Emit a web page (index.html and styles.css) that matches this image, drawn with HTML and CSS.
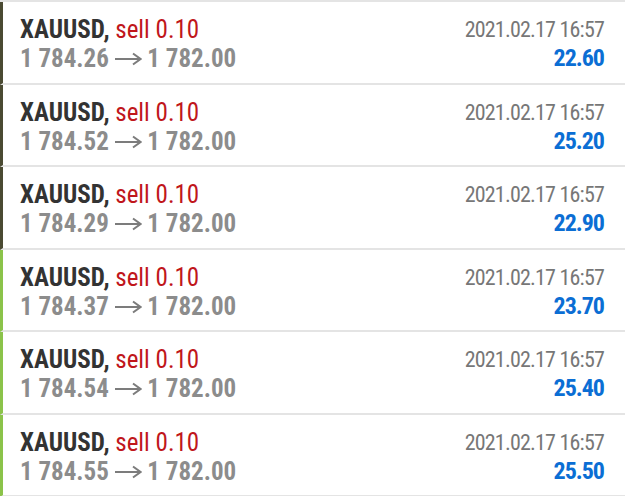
FILE: index.html
```html
<!DOCTYPE html>
<html lang="en">
<head>
    <meta charset="UTF-8">
    <meta name="viewport" content="width=device-width, initial-scale=1.0">
    <title>History</title>
    <link rel="stylesheet" href="styles.css">
</head>
<body>
    <div class="deal-list">
        <div class="deal dark">
            <div class="left">
                <div class="title"><b>XAUUSD,</b> <span class="sell">sell 0.10</span></div>
                <div class="prices">1 784.26 <svg class="arrow" viewBox="0 0 27 14"><path d="M0 7H25M18 1.5L25.5 7L18 12.5"/></svg> 1 782.00</div>
            </div>
            <div class="right">
                <div class="time">2021.02.17 16:57</div>
                <div class="profit">22.60</div>
            </div>
        </div>
        <div class="deal dark">
            <div class="left">
                <div class="title"><b>XAUUSD,</b> <span class="sell">sell 0.10</span></div>
                <div class="prices">1 784.52 <svg class="arrow" viewBox="0 0 27 14"><path d="M0 7H25M18 1.5L25.5 7L18 12.5"/></svg> 1 782.00</div>
            </div>
            <div class="right">
                <div class="time">2021.02.17 16:57</div>
                <div class="profit">25.20</div>
            </div>
        </div>
        <div class="deal dark">
            <div class="left">
                <div class="title"><b>XAUUSD,</b> <span class="sell">sell 0.10</span></div>
                <div class="prices">1 784.29 <svg class="arrow" viewBox="0 0 27 14"><path d="M0 7H25M18 1.5L25.5 7L18 12.5"/></svg> 1 782.00</div>
            </div>
            <div class="right">
                <div class="time">2021.02.17 16:57</div>
                <div class="profit">22.90</div>
            </div>
        </div>
        <div class="deal green">
            <div class="left">
                <div class="title"><b>XAUUSD,</b> <span class="sell">sell 0.10</span></div>
                <div class="prices">1 784.37 <svg class="arrow" viewBox="0 0 27 14"><path d="M0 7H25M18 1.5L25.5 7L18 12.5"/></svg> 1 782.00</div>
            </div>
            <div class="right">
                <div class="time">2021.02.17 16:57</div>
                <div class="profit">23.70</div>
            </div>
        </div>
        <div class="deal green">
            <div class="left">
                <div class="title"><b>XAUUSD,</b> <span class="sell">sell 0.10</span></div>
                <div class="prices">1 784.54 <svg class="arrow" viewBox="0 0 27 14"><path d="M0 7H25M18 1.5L25.5 7L18 12.5"/></svg> 1 782.00</div>
            </div>
            <div class="right">
                <div class="time">2021.02.17 16:57</div>
                <div class="profit">25.40</div>
            </div>
        </div>
        <div class="deal green">
            <div class="left">
                <div class="title"><b>XAUUSD,</b> <span class="sell">sell 0.10</span></div>
                <div class="prices">1 784.55 <svg class="arrow" viewBox="0 0 27 14"><path d="M0 7H25M18 1.5L25.5 7L18 12.5"/></svg> 1 782.00</div>
            </div>
            <div class="right">
                <div class="time">2021.02.17 16:57</div>
                <div class="profit">25.50</div>
            </div>
        </div>
    </div>
</body>
</html>
```

FILE: styles.css
```css
body {
    margin: 0;
    padding: 0;
    background-color: #ffffff;
    font-family: 'Roboto', 'Liberation Sans', sans-serif;
    font-stretch: condensed;
    overflow: hidden;
}
.deal-list {
    border-top: 2px solid #e4e4e4;
}
.deal {
    display: flex;
    justify-content: space-between;
    height: 80.5px;
    border-bottom: 2px solid #e4e4e4;
    border-left: 3px solid #4a4a32;
    padding: 0 21px 0 17px;
}
.deal.green {
    border-left-color: #8bc34a;
}
.left, .right {
    display: flex;
    flex-direction: column;
    padding-top: 13px;
    line-height: 29px;
    font-size: 25px;
}
.right {
    align-items: flex-end;
}
.title b {
    color: #333333;
}
.sell {
    color: #c0161b;
}
.prices {
    color: #8c8c8c;
    font-weight: bold;
}
.arrow {
    width: 27px;
    height: 14px;
    vertical-align: 1px;
    fill: none;
    stroke: #7c7c7c;
    stroke-width: 2;
}
.time {
    color: #777777;
    font-size: 22px;
    letter-spacing: -0.8px;
}
.profit {
    color: #0b6ed4;
    font-weight: bold;
    font-size: 24px;
    letter-spacing: -1px;
}
```
